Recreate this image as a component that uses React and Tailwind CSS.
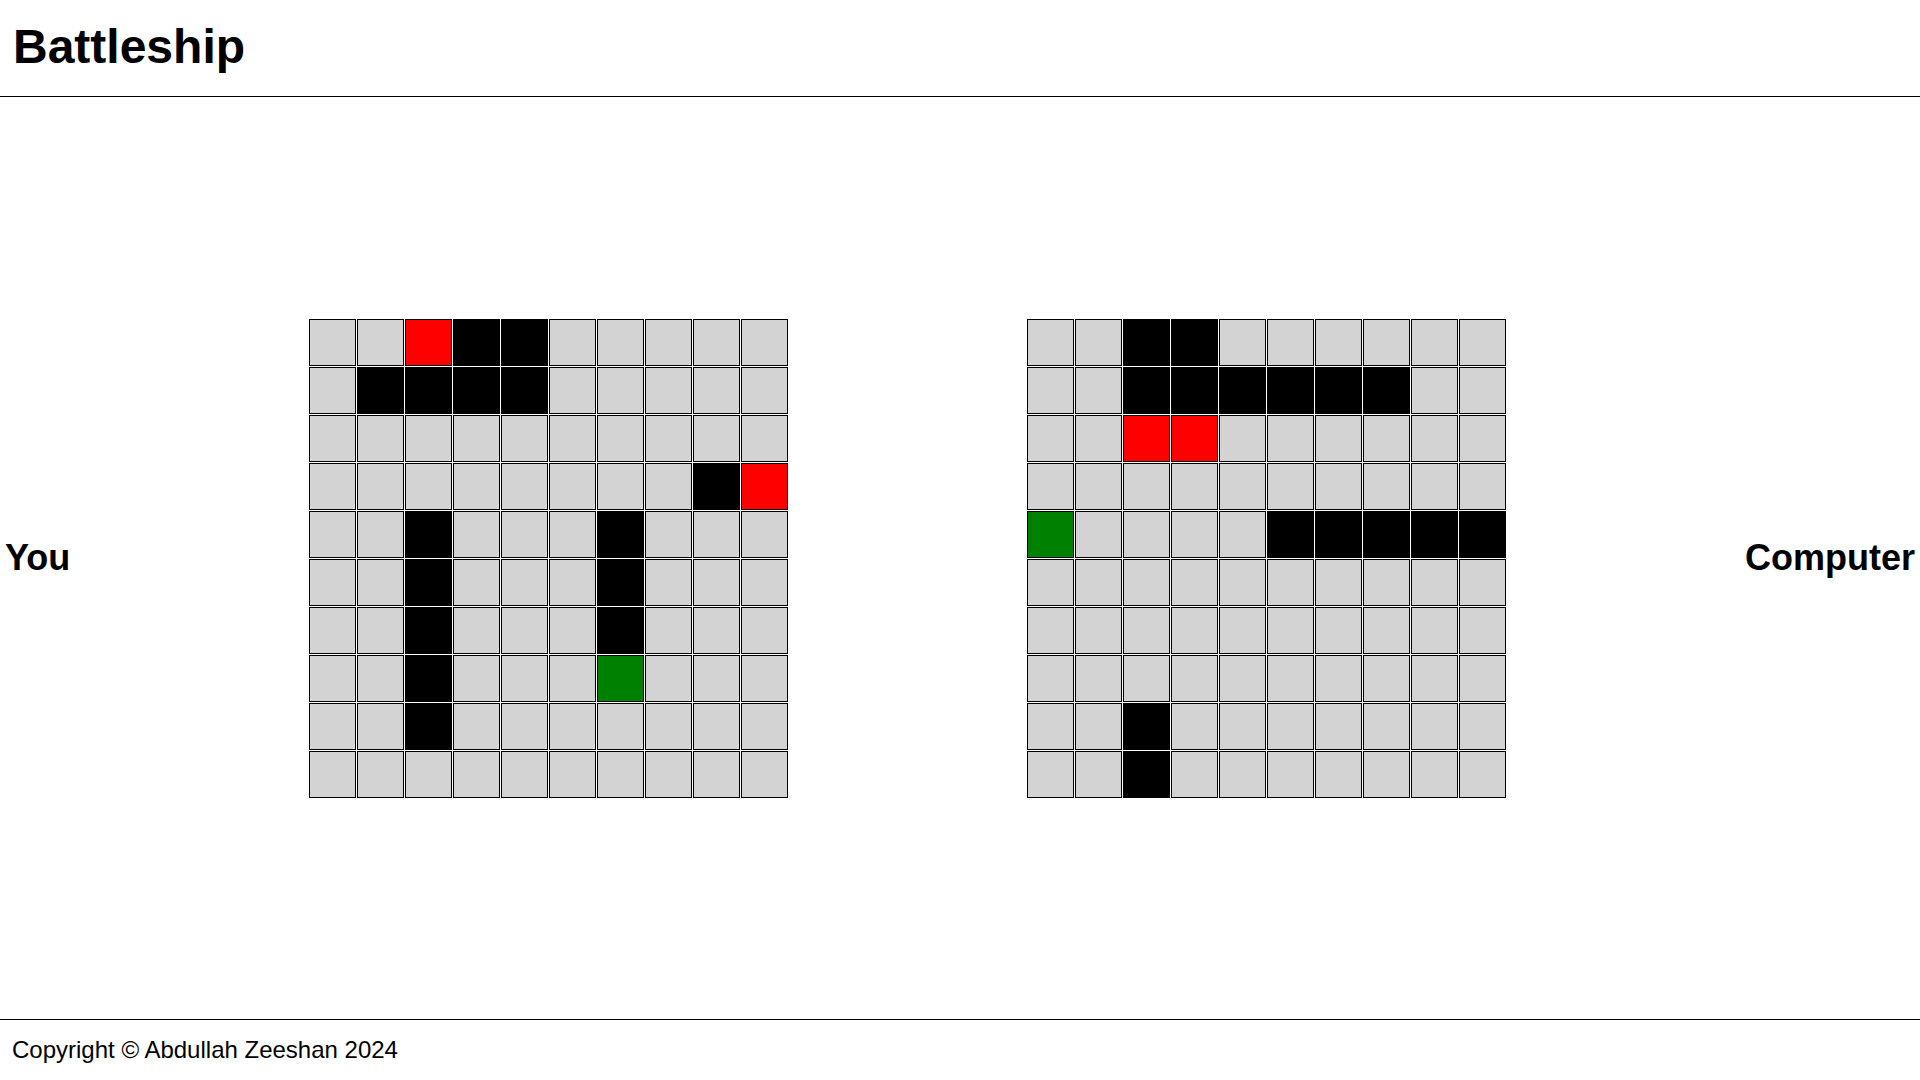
import React from "react";

const youBoard = [
  "ggRBBggggg",
  "gBBBBggggg",
  "gggggggggg",
  "ggggggggBR",
  "ggBgggBggg",
  "ggBgggBggg",
  "ggBgggBggg",
  "ggBgggGggg",
  "ggBggggggg",
  "gggggggggg",
];

const computerBoard = [
  "ggBBgggggg",
  "ggBBBBBBgg",
  "ggRRgggggg",
  "gggggggggg",
  "GggggBBBBB",
  "gggggggggg",
  "gggggggggg",
  "gggggggggg",
  "ggBggggggg",
  "ggBggggggg",
];

const cellColors = {
  g: "bg-[#d3d3d3]",
  B: "bg-black",
  R: "bg-[#ff0000]",
  G: "bg-[#008000]",
};

const Board = ({ rows }) => {
  return (
    <div className="grid grid-cols-10 gap-px">
      {rows.map((row, r) =>
        row.split("").map((c, i) => (
          <div
            key={`${r}-${i}`}
            className={`w-[47px] h-[47px] border border-black ${cellColors[c]}`}
          ></div>
        ))
      )}
    </div>
  );
};

const App = () => {
  return (
    <div className="h-screen flex flex-col bg-white text-black font-['Liberation_Sans',Arial,sans-serif]">
      {/* Header */}
      <header className="h-[97px] border-b border-black flex items-center px-[13px]">
        <h1 className="text-[48px] font-bold leading-none pb-[2px]">Battleship</h1>
      </header>

      {/* Game area */}
      <main className="flex-1 flex items-center justify-between px-[5px]">
        <h2 className="text-[36px] font-bold leading-none">You</h2>
        <Board rows={youBoard} />
        <Board rows={computerBoard} />
        <h2 className="text-[36px] font-bold leading-none">Computer</h2>
      </main>

      {/* Footer */}
      <footer className="h-[61px] border-t border-black flex items-center px-[12px]">
        <p className="text-[24px] leading-none">Copyright © Abdullah Zeeshan 2024</p>
      </footer>
    </div>
  );
};

export default App;
